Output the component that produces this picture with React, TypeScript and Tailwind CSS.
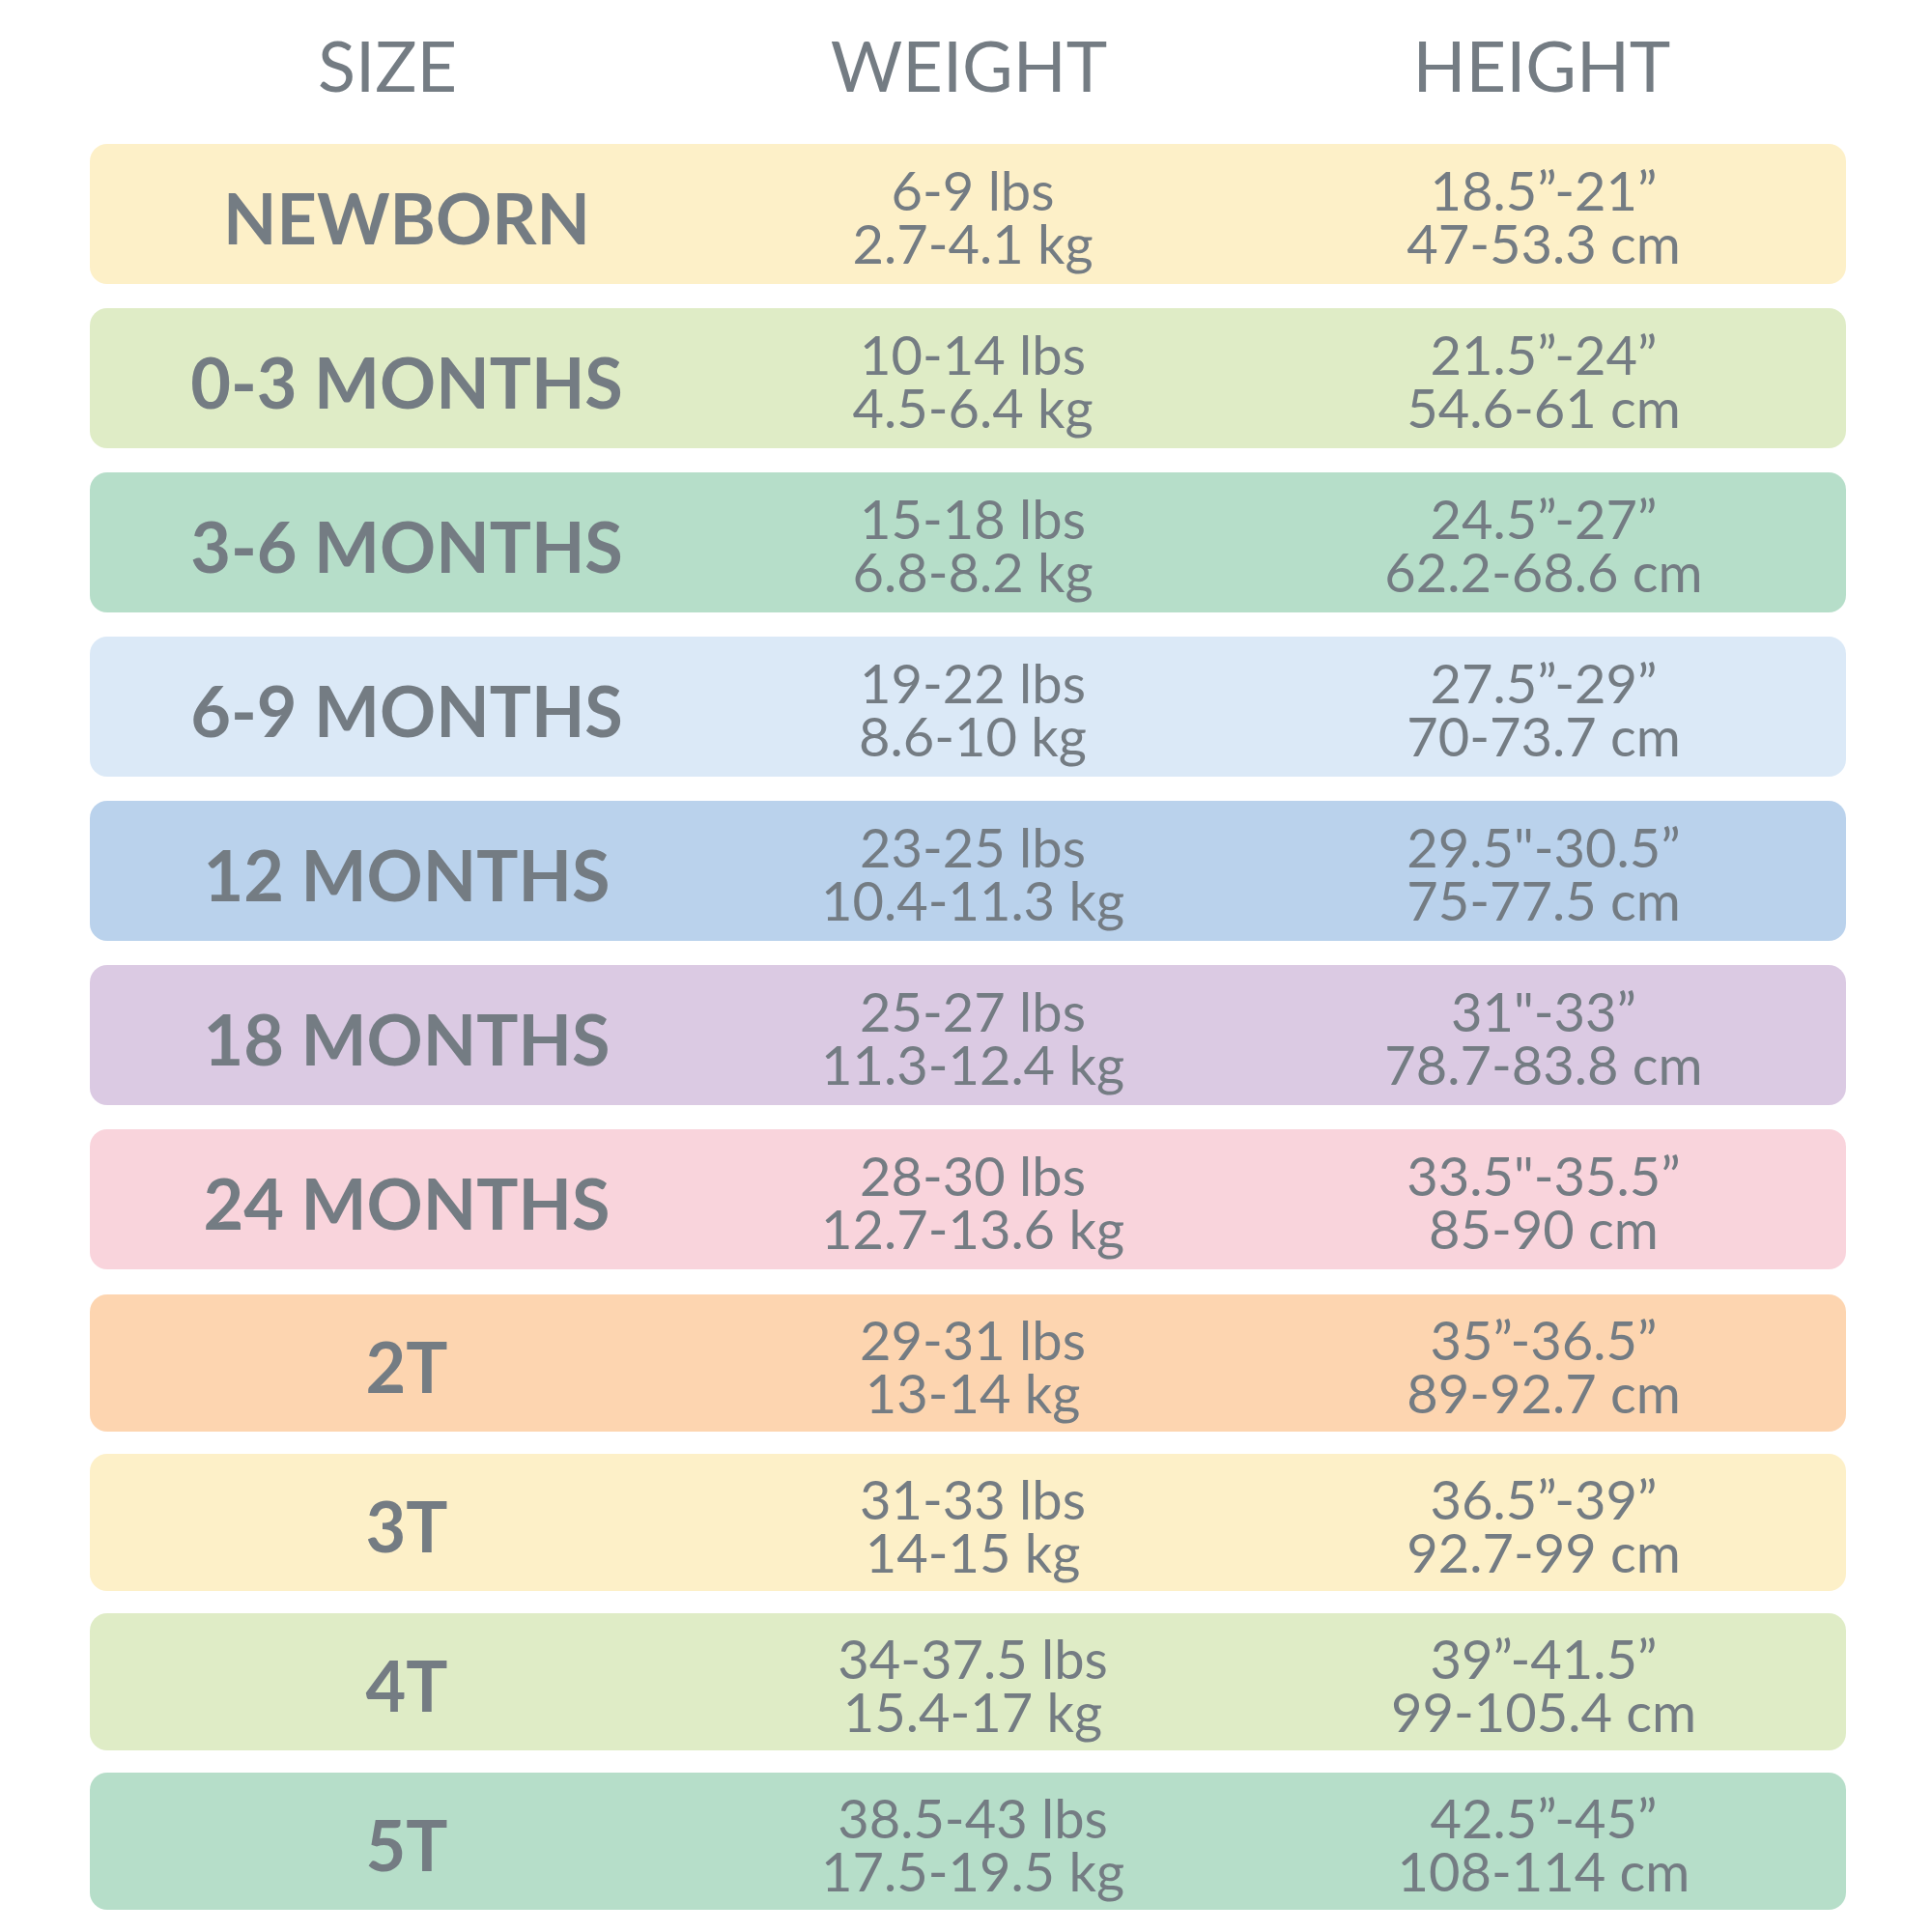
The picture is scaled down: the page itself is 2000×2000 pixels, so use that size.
const rows = [
  { size: "NEWBORN", lbs: "6-9 lbs", kg: "2.7-4.1 kg", inch: "18.5”-21”", cm: "47-53.3 cm", bg: "bg-[#fdf0c8]" },
  { size: "0-3 MONTHS", lbs: "10-14 lbs", kg: "4.5-6.4 kg", inch: "21.5”-24”", cm: "54.6-61 cm", bg: "bg-[#dfecc6]" },
  { size: "3-6 MONTHS", lbs: "15-18 lbs", kg: "6.8-8.2 kg", inch: "24.5”-27”", cm: "62.2-68.6 cm", bg: "bg-[#b6dec9]" },
  { size: "6-9 MONTHS", lbs: "19-22 lbs", kg: "8.6-10 kg", inch: "27.5”-29”", cm: "70-73.7 cm", bg: "bg-[#dbe9f7]" },
  { size: "12 MONTHS", lbs: "23-25 lbs", kg: "10.4-11.3 kg", inch: "29.5\"-30.5”", cm: "75-77.5 cm", bg: "bg-[#bad2ec]" },
  { size: "18 MONTHS", lbs: "25-27 lbs", kg: "11.3-12.4 kg", inch: "31\"-33”", cm: "78.7-83.8 cm", bg: "bg-[#dbcae3]" },
  { size: "24 MONTHS", lbs: "28-30 lbs", kg: "12.7-13.6 kg", inch: "33.5\"-35.5”", cm: "85-90 cm", bg: "bg-[#f9d4dc]" },
]

const toddlers = [
  { size: "2T", lbs: "29-31 lbs", kg: "13-14 kg", inch: "35”-36.5”", cm: "89-92.7 cm", bg: "bg-[#fdd5b0]" },
  { size: "3T", lbs: "31-33 lbs", kg: "14-15 kg", inch: "36.5”-39”", cm: "92.7-99 cm", bg: "bg-[#fdf0c8]" },
  { size: "4T", lbs: "34-37.5 lbs", kg: "15.4-17 kg", inch: "39”-41.5”", cm: "99-105.4 cm", bg: "bg-[#dfecc6]" },
  { size: "5T", lbs: "38.5-43 lbs", kg: "17.5-19.5 kg", inch: "42.5”-45”", cm: "108-114 cm", bg: "bg-[#b6dec9]" },
]

type Row = (typeof rows)[number]

function SizeRow({ row, tall }: { row: Row; tall: boolean }) {
  return (
    <div
      className={`grid grid-cols-[656px_516px_1fr] rounded-[18px] ${row.bg} ${tall ? "h-[145px]" : "h-[142px]"}`}
    >
      <div className="flex items-center justify-center pt-[6px] text-[72px] font-bold leading-[72px]">
        {row.size}
      </div>
      <div className="flex flex-col items-center justify-center pt-[5px] text-[56px] leading-[55px]">
        <span>{row.lbs}</span>
        <span>{row.kg}</span>
      </div>
      <div className="flex flex-col items-center justify-center pl-[20px] pt-[5px] text-[56px] leading-[55px]">
        <span>{row.inch}</span>
        <span>{row.cm}</span>
      </div>
    </div>
  )
}

export default function App() {
  return (
    <div className="w-[2000px] h-[2000px] bg-white text-[#747c83] font-['Lato',sans-serif]">
      <div className="ml-[93px] w-[1818px]">
        {/* column headings */}
        <div className="grid h-[149px] grid-cols-[656px_516px_1fr] pt-[31px] text-[72px] leading-[72px]">
          <div className="pr-[40px] text-center">SIZE</div>
          <div className="pr-[8px] text-center">WEIGHT</div>
          <div className="pl-[16px] text-center">HEIGHT</div>
        </div>

        <div className="flex flex-col gap-[25px]">
          {rows.map((r) => (
            <SizeRow key={r.size} row={r} tall />
          ))}
        </div>
        <div className="mt-[26px] flex flex-col gap-[23px]">
          {toddlers.map((r) => (
            <SizeRow key={r.size} row={r} tall={false} />
          ))}
        </div>
      </div>
    </div>
  )
}
